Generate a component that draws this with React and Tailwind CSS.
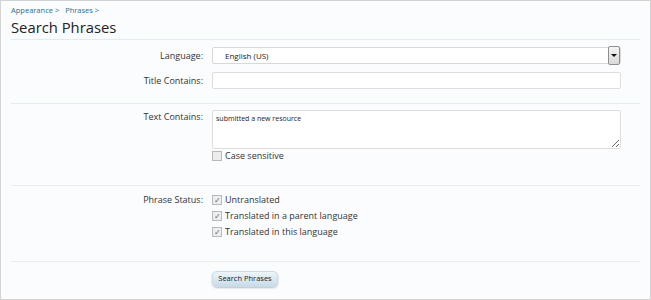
import { useState } from "react";

function Check({ checked, label }) {
    return (
        <label className="flex items-center h-[16px] gap-[3px] text-[9px] text-[#333]">
            <span className="w-[10px] h-[10px] border border-[#b9b9b9] bg-[#eeeeee] flex items-center justify-center text-[8px] leading-none text-[#4a6b8a]">
                {checked ? "✓" : ""}
            </span>
            <span>{label}</span>
        </label>
    );
}

export default function App() {
    const [text, settext] = useState("submitted a new resource");

    return (
        <div className="w-[651px] h-[300px] bg-[#fbfcfe] border border-[#d3d3d3] font-['Open_Sans',sans-serif] text-[#222] overflow-hidden">
            <div className="px-[10px]">
                <div className="pt-[4px] h-[16px] leading-[10px] text-[7.5px] text-[#2b6f93] flex gap-[6px]">
                    <span>Appearance &gt;</span>
                    <span>Phrases &gt;</span>
                </div>
                <h1 className="text-[14.8px] leading-[20px] text-[#222] h-[20px]">Search Phrases</h1>
                <div className="mt-[2px] h-px bg-[#dcedf3] w-[629px]"></div>

                <div className="grid grid-cols-[192px_409px] gap-x-[9px] pt-[6px] text-[9px]">
                    <span className="text-right leading-[17px] text-[#333] mt-[1px]">Language:</span>
                    <div className="relative h-[17px] mt-[1px] border border-[#d8d8d8] bg-white rounded-[2px] flex items-center pl-[12px] text-[8px]">
                        English (US)
                        <span className="absolute right-0 -top-[2px] w-[12px] h-[19px] border border-[#8f8f8f] rounded-[2px] bg-gradient-to-b from-[#f4f4f4] to-[#d9d9d9] flex items-center justify-center">
                            <span className="w-0 h-0 border-l-[3px] border-r-[3px] border-t-[3px] border-l-transparent border-r-transparent border-t-[#111]"></span>
                        </span>
                    </div>
                    <span className="text-right leading-[17px] text-[#333] mt-[8px]">Title Contains:</span>
                    <div className="h-[17px] mt-[8px] border border-[#dedede] bg-white rounded-[2px]"></div>
                </div>
                <div className="mt-[14px] h-px bg-[#dcedf3] w-[629px]"></div>

                <div className="grid grid-cols-[192px_409px] gap-x-[9px] pt-[6px] text-[9px]">
                    <span className="text-right text-[#333] leading-[14px]">Text Contains:</span>
                    <div>
                        <textarea value={text} onChange={(e) => settext(e.target.value)} className="block w-[409px] h-[39px] border border-[#dedede] bg-white rounded-[2px] text-[7px] px-[3px] py-[3px] leading-[10px] resize-y outline-none"></textarea>
                        <div className="text-[#333]">
                            <label className="flex items-center h-[14px] gap-[3px] text-[9px]">
                                <span className="w-[10px] h-[10px] border border-[#b9b9b9] bg-[#ececec]"></span>
                                <span>Case sensitive</span>
                            </label>
                        </div>
                    </div>
                </div>
                <div className="mt-[22px] h-px bg-[#e6eef2] w-[629px]"></div>

                <div className="grid grid-cols-[192px_409px] gap-x-[9px] pt-[6px] text-[9px]">
                    <span className="text-right text-[#333] leading-[16px]">Phrase Status:</span>
                    <div className="flex flex-col">
                        <Check checked label="Untranslated" />
                        <Check checked label="Translated in a parent language" />
                        <Check checked label="Translated in this language" />
                    </div>
                </div>
                <div className="mt-[21px] h-px bg-[#e8ecef] w-[629px]"></div>

                <div className="pl-[201px] pt-[9px] flex">
                    <button className="block w-[66px] h-[16px] rounded-[5px] border border-[#c9dbe6] bg-gradient-to-b from-[#eef5fa] to-[#c8dcea] shadow-[0_1px_2px_rgba(0,0,0,0.25)] text-[7.5px] text-[#222] leading-none">
                        Search Phrases
                    </button>
                </div>
            </div>
        </div>
    );
}
